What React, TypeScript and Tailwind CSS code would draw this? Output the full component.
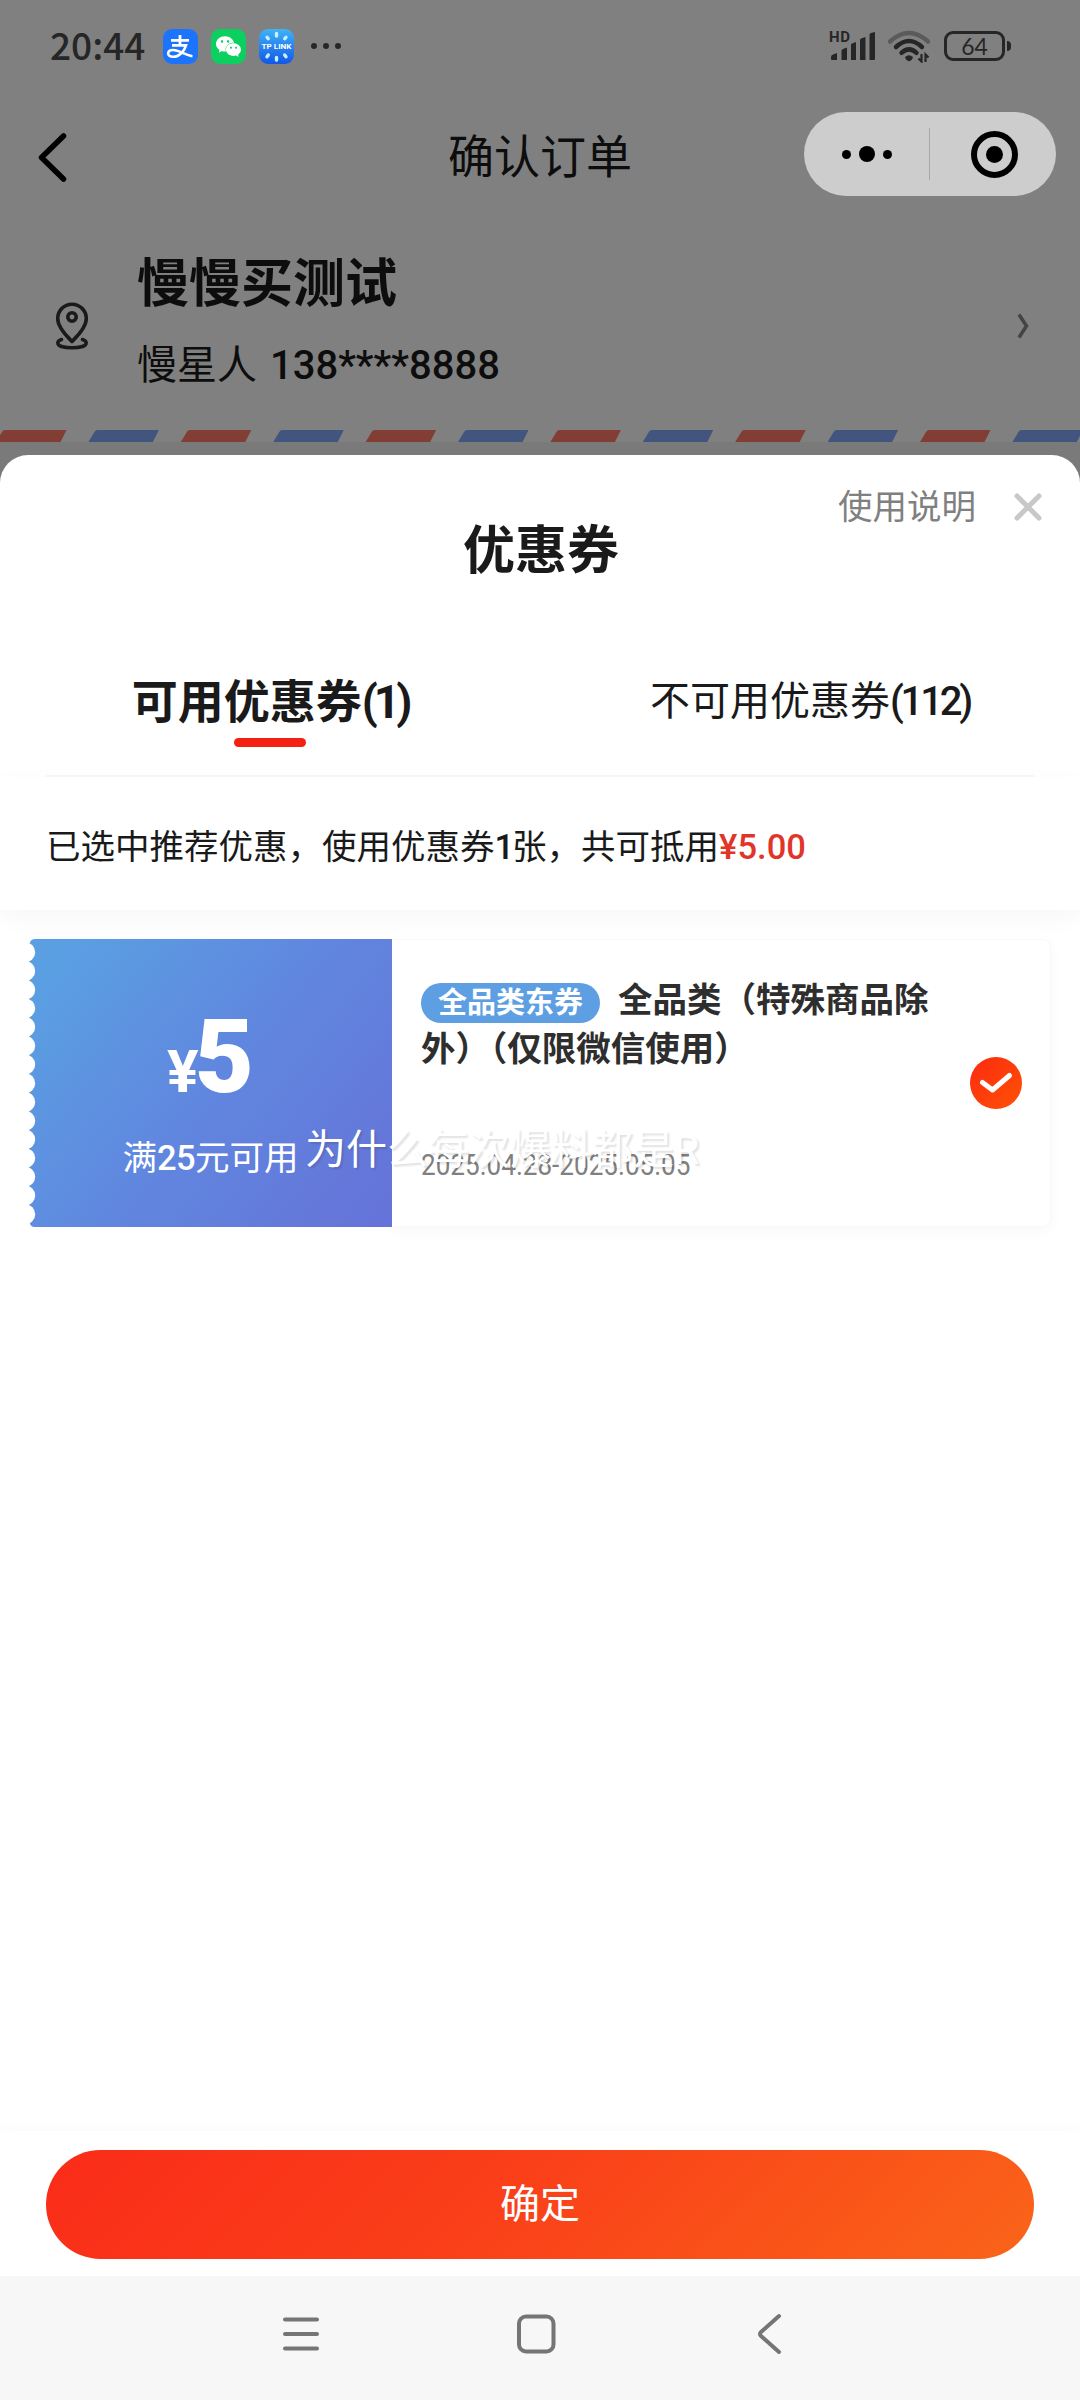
import React from "react";
import { SiWechat } from "react-icons/si";

const stripes = Array.from({ length: 12 }, (_, i) => i);
const scallops = Array.from({ length: 15 }, (_, i) => i);

const AlipayIcon = () => (
    <svg viewBox="0 0 35 35" className="size-[35px] rounded-[9px] bg-[#1b74fb]">
        <g fill="none" stroke="#fff" strokeLinecap="butt">
            <path d="M8 11.3H26M17 6V16" strokeWidth="2.8" />
            <path d="M9 16.4H23C21.5 21.5 17 27.8 10 27.8C3.5 27.8 3.6 21 10 21C16.5 21 22 26.3 29.5 27.2" strokeWidth="2.6" />
        </g>
    </svg>
);

const TpLinkIcon = () => (
    <svg viewBox="0 0 35 35" className="size-[35px] rounded-[9px]">
        <defs>
            <linearGradient id="tp" x1="0" y1="0" x2="0" y2="1">
                <stop offset="0" stopColor="#3fb4f6" />
                <stop offset="1" stopColor="#1257e8" />
            </linearGradient>
        </defs>
        <rect width="35" height="35" fill="url(#tp)" />
        <g stroke="#c4f0ff" strokeWidth="3.4" strokeLinecap="round">
            <path d="M17.5 4.5V7M17.5 28.5V31M8 8.2L9.3 9.8M27 8.2L25.7 9.8M8 27.8L9.3 26M27 27.8L25.7 26" />
        </g>
        <text x="17.5" y="20" textAnchor="middle" textLength="30" lengthAdjust="spacingAndGlyphs" fontSize="6.6" fontWeight="700" fontFamily="Roboto, sans-serif" fill="#fff">TP LINK</text>
    </svg>
);

const SignalIcon = () => (
    <svg viewBox="0 0 48 32" className="h-8 w-12 overflow-visible">
        <text x="0" y="12" fontSize="15" fontWeight="700" fontFamily="Roboto, sans-serif" textLength="21" fill="#262626">HD</text>
        <g fill="#262626">
            <path d="M2 27Q2 25 4 24.500L8 23V30H3Q2 30 2 29Z" />
            <path d="M12.500 21Q12.500 19.500 14 19L18 17.500V30H12.500Z" />
            <path d="M22 15Q22 14 23 13.500L27 12V30H22Z" />
            <path d="M31 10Q31 9 32 8.500L36.500 7V30H31Z" />
            <path d="M40.500 5Q40.500 3.500 42 3L46 2V29Q46 30 45 30H40.500Z" />
        </g>
    </svg>
);

const WifiIcon = () => (
    <svg viewBox="0 0 42 33" className="h-[33px] w-[42px]" fill="none">
        <path d="M2 11.500Q21 -5.500 40 11.500" stroke="#5b5b5b" strokeWidth="4.500" strokeLinecap="round" />
        <path d="M8 17Q21 5 34 17" stroke="#262626" strokeWidth="4.500" strokeLinecap="round" />
        <path d="M13.500 22.800Q21 16 28.500 22.800" stroke="#262626" strokeWidth="4.500" strokeLinecap="round" />
        <path d="M17 27Q21 23.500 25 27Q24 31 21 31.200Q18 31 17 27Z" fill="#262626" />
        <path d="M30.500 28.500L33.500 31.500V24M37.500 32V24.500L40.500 27.500" stroke="#262626" strokeWidth="2.200" />
    </svg>
);

const CouponEdge = () => (
    <svg viewBox="0 0 7 288" className="absolute left-0 top-0 h-[288px] w-[7px]">
        <path d="M0 0H5Q1 1 1 4L0 4Z" fill="#fff" />
        <path d="M0 288H5Q1 287 1 284L0 284Z" fill="#fff" />
        {scallops.map((i) => (
            <circle key={i} cx="-3.700" cy={13.2 + i * 18.72} r="9.900" fill="#fff" />
        ))}
    </svg>
);

const StatusBar = () => (
    <div className="flex h-[92px] items-center pl-[50px] pr-[69px] text-[#262626]">
        <span className="w-[113px] pb-[3px] font-['Noto_Sans_CJK_SC',sans-serif] text-[37px] font-medium leading-[89px]">20:44</span>
        <div className="flex items-center gap-[13px]">
            <AlipayIcon />
            <div className="flex size-[35px] items-center justify-center rounded-[9px] bg-[#0bcf5f]">
                <SiWechat className="size-[25px] text-white" />
            </div>
            <TpLinkIcon />
        </div>
        <div className="ml-[17px] flex gap-1.5">
            <i className="size-1.5 rounded-full bg-[#262626]" />
            <i className="size-1.5 rounded-full bg-[#262626]" />
            <i className="size-1.5 rounded-full bg-[#262626]" />
        </div>
        <div className="ml-auto flex items-center">
            <SignalIcon />
            <div className="ml-[11px]"><WifiIcon /></div>
            <div className="ml-[14px] flex h-[30px] w-[61px] items-center justify-center rounded-[9px] border-[3px] border-[#262626] font-['Lato',sans-serif] text-[23px] leading-6">64</div>
            <div className="ml-[2px] h-[10px] w-1 rounded-r-sm bg-[#262626]" />
        </div>
    </div>
);

const OrderHeader = () => (
    <div className="relative flex h-[130px] items-center justify-between pl-[37px] pr-[24px]">
        <svg viewBox="0 0 31 52" className="h-[52px] w-[31px]" fill="none" stroke="#000" strokeWidth="5.500" strokeLinecap="round" strokeLinejoin="round">
            <path d="M26.500 5L4.500 26.500L26.500 48" />
        </svg>
        <h1 className="absolute inset-x-0 top-[32px] text-center text-[46px] leading-[66px] text-[#0d0d0d]">确认订单</h1>
        <div className="mb-1.5 flex h-[84px] w-[252px] items-center rounded-full bg-[#cdcdcd]">
            <div className="flex w-[125px] items-center justify-center gap-2">
                <i className="size-[9px] rounded-full bg-black" />
                <i className="size-4 rounded-full bg-black" />
                <i className="size-[9px] rounded-full bg-black" />
            </div>
            <div className="h-[52px] w-px bg-[#a8a8a8]" />
            <div className="flex flex-1 items-center justify-center pl-0.5">
                <div className="flex size-[47px] items-center justify-center rounded-full border-[6px] border-black">
                    <i className="size-[17px] rounded-full bg-black" />
                </div>
            </div>
        </div>
    </div>
);

const Address = () => (
    <div className="flex h-[208px] items-center pl-[54px] pr-[49px] text-[#0d0d0d]">
        <svg viewBox="0 0 36 50" className="h-[50px] w-9" fill="none" stroke="#1a1a1a" strokeWidth="3.600" strokeLinecap="round">
            <path d="M18 40.500C14 36.500 3.700 27 3.700 17.500A14.300 14.300 0 0 1 32.300 17.500C32.300 27 22 36.500 18 40.500Z" strokeLinejoin="round" />
            <circle cx="18" cy="16" r="4.200" />
            <path d="M7.500 38.500C4 39.500 3.500 41.500 4 43C5.500 48 30.500 48 32 43C32.500 41.500 32 39.500 28.500 38.500" />
        </svg>
        <div className="ml-[47px] flex-1">
            <p className="text-[52px] font-bold leading-[76px]">慢慢买测试</p>
            <p className="mt-1 text-[40px] leading-[78px]">
                慢星人 <span className="ml-[3px] font-medium">138****8888</span>
            </p>
        </div>
        <svg viewBox="0 0 14 26" className="h-[26px] w-[14px]" fill="none" stroke="#444" strokeWidth="3.500">
            <path d="M2 1.500L9.500 13L2 24.500" />
        </svg>
    </div>
);

const AirmailBorder = () => (
    <svg viewBox="0 0 1080 12" className="h-3 w-full">
        {stripes.map((i) => (
            <path key={i} d="M8 0H69.500L63.500 12H-1L5 2Q6 0 8 0Z" transform={`translate(${-3 + i * 92.4} 0)`} fill={i % 2 ? "#42557f" : "#823e35"} />
        ))}
    </svg>
);

const Coupon = () => (
    <div className="relative mx-[29px] mt-[29px] flex h-[288px]">
        <div className="relative flex w-[363px] flex-col items-center overflow-hidden bg-[linear-gradient(128deg,#5a9fe2_8%,#6087df_50%,#6672d8_100%)] text-white">
            <CouponEdge />
            <div className="mt-[68px] flex h-[118px] items-baseline leading-[100px]">
                <span className="text-[59px] font-bold">¥</span>
                <span className="-ml-1 text-[102px] font-black">5</span>
            </div>
            <p className="mt-[8px] text-[34.500px] leading-[50px]">满<b className="font-medium tracking-[-0.5px]">25</b>元可用</p>
        </div>
        <div className="flex flex-1 items-center rounded-r-lg border border-l-0 border-[#f8f8f8] bg-white pl-[29px] pr-[28px] shadow-[0_4px_16px_rgba(0,0,0,0.03)]">
            <div className="h-full w-[530px] pt-[36px]">
                <p className="h-[98px] text-[34.500px] font-bold leading-[49px] text-[#2e2e2e]">
                    <span className="mr-[18px] inline-flex h-10 w-[179px] items-center justify-center rounded-full bg-[#5d9fe2] align-[-1px] text-[29px] leading-10 text-white">全品类东券</span>
                    全品类（特殊商品除外）（仅限微信使用）
                </p>
                <p className="mt-[69px] origin-left scale-x-90 whitespace-nowrap text-[29px] leading-[44px] text-[#808080]">2025.04.28-2025.05.05</p>
            </div>
            <svg viewBox="0 0 52 52" className="ml-auto size-[52px] shrink-0">
                <defs>
                    <linearGradient id="ck" x1="0" y1="0" x2="1" y2="1">
                        <stop offset="0" stopColor="#fb2a10" />
                        <stop offset="1" stopColor="#ff5206" />
                    </linearGradient>
                </defs>
                <circle cx="26" cy="26" r="26" fill="url(#ck)" />
                <path d="M12.500 25.500L22.500 33L39.500 18.500" fill="none" stroke="#fff" strokeWidth="5" strokeLinecap="round" strokeLinejoin="round" />
            </svg>
        </div>
        {/* floating comment drifting over the card */}
        <p className="absolute left-[276px] top-[181px] whitespace-nowrap text-[41px] leading-[60px] text-white [text-shadow:2px_2px_2px_rgba(0,0,0,0.12)]">为什么每次爆料都是R</p>
    </div>
);

const CouponSheet = () => (
    <div className="flex h-[1821px] flex-col rounded-t-[28px] bg-white text-[#1a1a1a]">
        <div className="relative h-[180px]">
            <h2 className="pl-0.5 pt-[59px] text-center text-[52px] font-bold leading-[76px]">优惠券</h2>
            <div className="absolute right-[37px] top-[27px] flex items-center gap-[37px]">
                <span className="text-[34.500px] leading-[50px] text-[#808080]">使用说明</span>
                <svg viewBox="0 0 30 30" className="size-[30px]" stroke="#c8c8c8" strokeWidth="5" strokeLinecap="round">
                    <path d="M4 4L26 26M26 4L4 26" />
                </svg>
            </div>
        </div>
        <div className="mx-[46px] flex h-[142px] border-b-2 border-[#f6f6f6]">
            <div className="-ml-[46px] flex w-[540px] flex-col items-center pt-[33px]">
                <span className="whitespace-nowrap text-[46px] font-bold leading-[68px]">可用优惠券<span className="tracking-[-4px]">(1)</span></span>
                <i className="mt-[2px] h-[9px] w-[72px] rounded-full bg-[#f42112]" />
            </div>
            <div className="-mr-[46px] w-[540px] whitespace-nowrap pt-[39px] text-center text-[40px] leading-[56px]">
                不可用优惠券<span className="font-medium tracking-[-3.2px]">(112)</span>
            </div>
        </div>
        <div className="h-[133px] pl-[46px] pt-[45px] text-[34.500px] leading-[50px] shadow-[0_8px_24px_rgba(0,0,0,0.035)]">
            已选中推荐优惠，使用优惠券<span className="font-medium tracking-[-2px]">1</span>张，共可抵用<span className="font-medium text-[#e2352a]">¥5.00</span>
        </div>
        <Coupon />
        <div className="mt-auto px-[46px] pb-[17px] pt-[19px] shadow-[0_-4px_16px_rgba(0,0,0,0.02)]">
            <button className="block h-[109px] w-full rounded-full bg-[linear-gradient(135deg,#fa2c19,#fa3f19_45%,#fa6419)] text-[40px] leading-[109px] text-white">确定</button>
        </div>
    </div>
);

const NavBar = () => (
    <div className="flex h-[124px] bg-[#f7f7f7] pl-[281px] pt-[36px]">
        <svg viewBox="0 0 502 44" className="h-11 w-[502px]" fill="none" stroke="#757575" strokeWidth="4" strokeLinecap="round" strokeLinejoin="round">
            <path d="M4 7.500H36M4 22H36M4 36.500H36" />
            <rect x="238" y="4.500" width="34.500" height="35" rx="7" />
            <path d="M498 4L480 20Q478 22 480 24L498 40" />
        </svg>
    </div>
);

export default function App() {
    return (
        <div className="flex h-[2400px] w-[1080px] flex-col overflow-hidden bg-[#808080] font-['Roboto','Noto_Sans_CJK_SC',sans-serif]">
            <StatusBar />
            <OrderHeader />
            <Address />
            <AirmailBorder />
            <div className="h-[13px] bg-[#7a7a7a]" />
            <div className="bg-[#7a7a7a]">
                <CouponSheet />
            </div>
            <NavBar />
        </div>
    );
}
